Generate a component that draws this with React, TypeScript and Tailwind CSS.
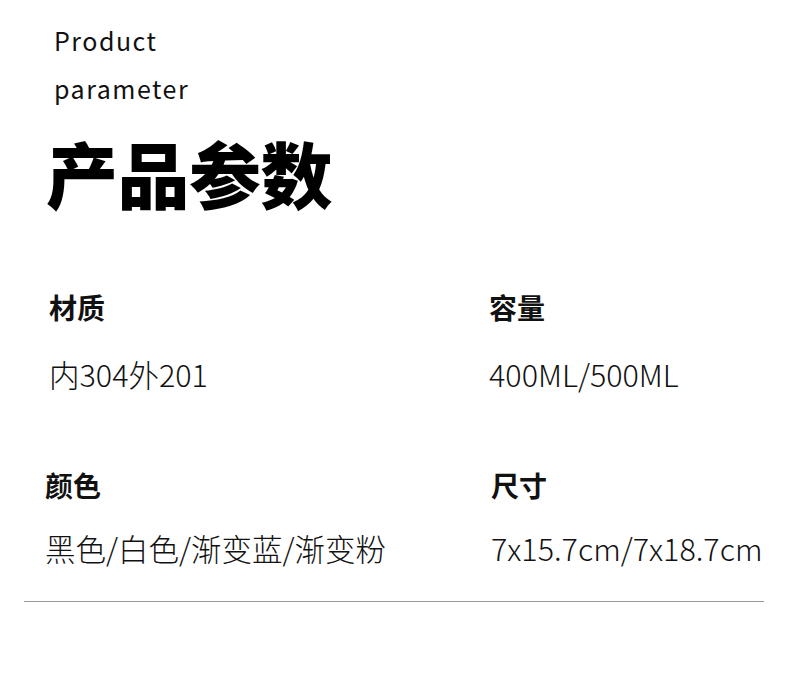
const font = { fontFamily: '"Noto Sans CJK SC", "Noto Sans", sans-serif' };

function Param({ label, value, gap, className }: { label: string; value: string; gap: number; className?: string }) {
    return (
        <div className={className}>
            <div className="h-[32px] text-[28px] leading-[32px] font-bold text-[#111]">{label}</div>
            <div className={`${gap === 35 ? "mt-[35px]" : "mt-[31px]"} h-[32px] text-[30.5px] leading-[32px] font-light text-[#111] whitespace-nowrap`}>{value}</div>
        </div>
    );
}

export default function App() {
    return (
        <div className="w-[790px] h-[678px] bg-white overflow-hidden" style={font}>
            {/* heading */}
            <div className="pl-[54px] pt-[16px]">
                <div className="text-[25px] leading-[48px] tracking-[1.5px] text-[#111]">Product</div>
                <div className="text-[25px] leading-[48px] tracking-[1.5px] text-[#111]">parameter</div>
            </div>
            <h1 className="pl-[46px] mt-[24px] h-[72px] text-[72px] leading-[72px] font-black text-black tracking-[-0.5px]">产品参数</h1>

            {/* params */}
            <div className="mt-[83px] grid grid-cols-[488px_1fr]">
                <Param label="材质" value="内304外201" gap={35} className="pl-[49px]" />
                <Param label="容量" value="400ML/500ML" gap={35} className="pl-[1px]" />
            </div>
            <div className="mt-[79px] grid grid-cols-[488px_1fr]">
                <Param label="颜色" value="黑色/白色/渐变蓝/渐变粉" gap={31} className="pl-[45px]" />
                <Param label="尺寸" value="7x15.7cm/7x18.7cm" gap={31} className="pl-[3px]" />
            </div>
            <div className="mt-[37px] mx-[24px] w-[740px] h-px bg-[#999]" />
        </div>
    );
}
